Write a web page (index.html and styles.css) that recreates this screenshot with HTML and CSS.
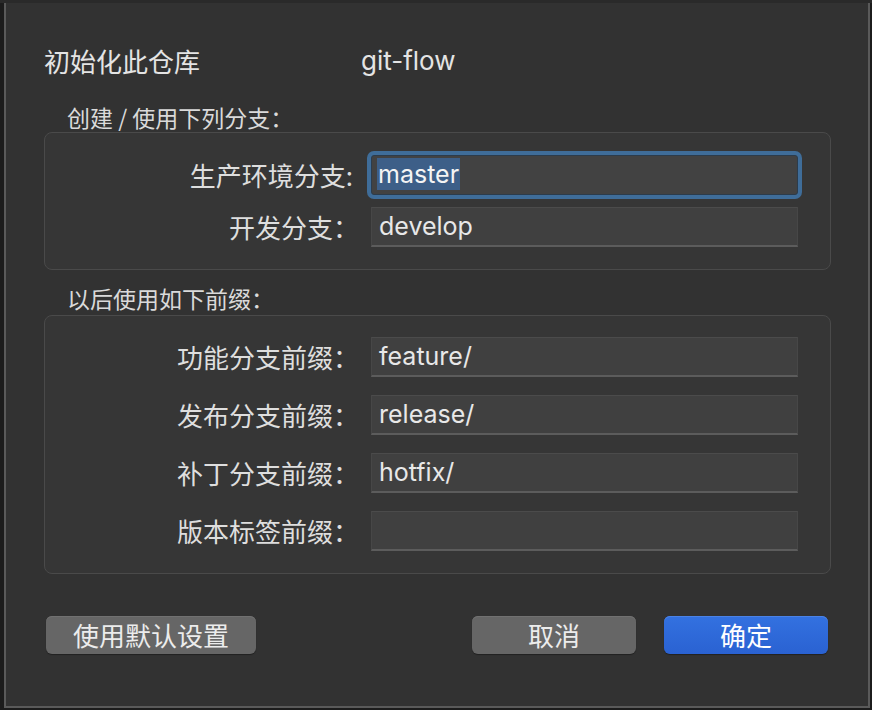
FILE: index.html
```html
<!DOCTYPE html>
<html lang="zh-CN">
<head>
<meta charset="utf-8">
<title>git-flow</title>
<link rel="stylesheet" href="styles.css">
</head>
<body>
<div class="topbar"></div>
<div class="dialog">
  <div class="title-row">
    <span class="title">初始化此仓库</span>
    <span class="tool">git-flow</span>
  </div>

  <div class="section-label first">创建 / 使用下列分支：</div>
  <div class="group group-branches">
    <div class="field">
      <span class="label label-ascii">生产环境分支:</span>
      <div class="input focused"><span class="sel">master</span></div>
    </div>
    <div class="field">
      <span class="label">开发分支：</span>
      <div class="input">develop</div>
    </div>
  </div>

  <div class="section-label second">以后使用如下前缀：</div>
  <div class="group group-prefixes">
    <div class="field">
      <span class="label">功能分支前缀：</span>
      <div class="input">feature/</div>
    </div>
    <div class="field">
      <span class="label">发布分支前缀：</span>
      <div class="input">release/</div>
    </div>
    <div class="field">
      <span class="label">补丁分支前缀：</span>
      <div class="input">hotfix/</div>
    </div>
    <div class="field">
      <span class="label">版本标签前缀：</span>
      <div class="input"></div>
    </div>
  </div>

  <div class="buttons">
    <button class="btn btn-default-settings">使用默认设置</button>
    <div class="spacer"></div>
    <button class="btn btn-cancel">取消</button>
    <button class="btn btn-ok">确定</button>
  </div>
</div>
</body>
</html>
```

FILE: styles.css
```css
* { box-sizing: border-box; }

html, body {
  margin: 0;
  padding: 0;
}

body {
  width: 872px;
  height: 710px;
  background: #1c1c1c;
  font-family: "Noto Sans CJK SC", "Inter", sans-serif;
  color: #dedede;
  overflow: hidden;
}

.topbar {
  height: 3px;
  background: #2a2a2a;
}

.dialog {
  margin: 0 2px 0 4px;
  height: 705px;
  background: #323232;
  border: 2px solid #5a5a5a;
  border-top: 0;
  padding: 42px 35px 0 36px;
  display: flex;
  flex-direction: column;
}

.title-row {
  display: flex;
  align-items: center;
  height: 32px;
  line-height: 32px;
  font-size: 26px;
  color: #e4e4e4;
}

.title {
  width: 317px;
  padding-left: 2px;
}

.tool {
  font-family: "Inter", "Noto Sans CJK SC", sans-serif;
  font-size: 26px;
  padding-left: 2px;
}

.section-label {
  font-size: 23px;
  line-height: 30px;
  height: 30px;
  padding-left: 25px;
  color: #dadada;
}

.section-label.first {
  margin-top: 25px;
}

.section-label.second {
  margin-top: 13px;
  margin-bottom: 2px;
}

.group {
  background: #363636;
  border: 1px solid #4a4a4a;
  border-radius: 8px;
  margin-left: 2px;
  margin-right: 2px;
  display: flex;
  flex-direction: column;
}

.group-branches {
  height: 138px;
  padding: 22px 32px 0 0;
  gap: 12px;
}

.group-prefixes {
  height: 259px;
  padding: 21px 32px 0 0;
  gap: 18px;
}

.field {
  display: grid;
  grid-template-columns: 314px 1fr;
  column-gap: 12px;
  align-items: center;
  height: 40px;
}

.label {
  text-align: right;
  font-size: 26px;
  line-height: 32px;
  color: #dedede;
}

.label-ascii {
  padding-right: 6px;
}

.input {
  height: 40px;
  background: #404040;
  border-top: 1px solid #4b4b4b;
  border-left: 1px solid #474747;
  border-right: 1px solid #474747;
  border-bottom: 2px solid #5c5c5c;
  padding: 0 7px;
  font-family: "Inter", "Noto Sans CJK SC", sans-serif;
  font-size: 25px;
  line-height: 36px;
  color: #e8e8e8;
  white-space: nowrap;
}

.input.focused {
  border: 1px solid #2c3c4c;
  box-shadow: 0 0 0 4px #3f6d99;
  border-radius: 3px;
  background: #424242;
  padding-left: 5px;
}

.sel {
  background: #3d5f88;
  color: #f4f4f4;
  display: inline-block;
  line-height: 32px;
  padding: 0 1px;
  margin-top: 2px;
}

.buttons {
  display: flex;
  align-items: center;
  margin-top: 42px;
  padding-left: 4px;
  padding-right: 5px;
  gap: 28px;
}

.spacer { flex: 1; }

.btn {
  height: 38px;
  border: 0;
  border-radius: 6px;
  font-family: "Noto Sans CJK SC", sans-serif;
  font-size: 26px;
  line-height: 36px;
  color: #ececec;
  padding: 0;
  background: #666666;
  box-shadow: inset 0 1px 0 #717171, 0 1px 1px rgba(0,0,0,0.35);
}

.btn-default-settings {
  width: 210px;
}

.btn-cancel {
  width: 164px;
}

.btn-ok {
  width: 164px;
  background: linear-gradient(#3371e0, #2a62d2);
  box-shadow: inset 0 1px 0 #4a82e6, 0 1px 1px rgba(0,0,0,0.35);
  color: #ffffff;
}
```
